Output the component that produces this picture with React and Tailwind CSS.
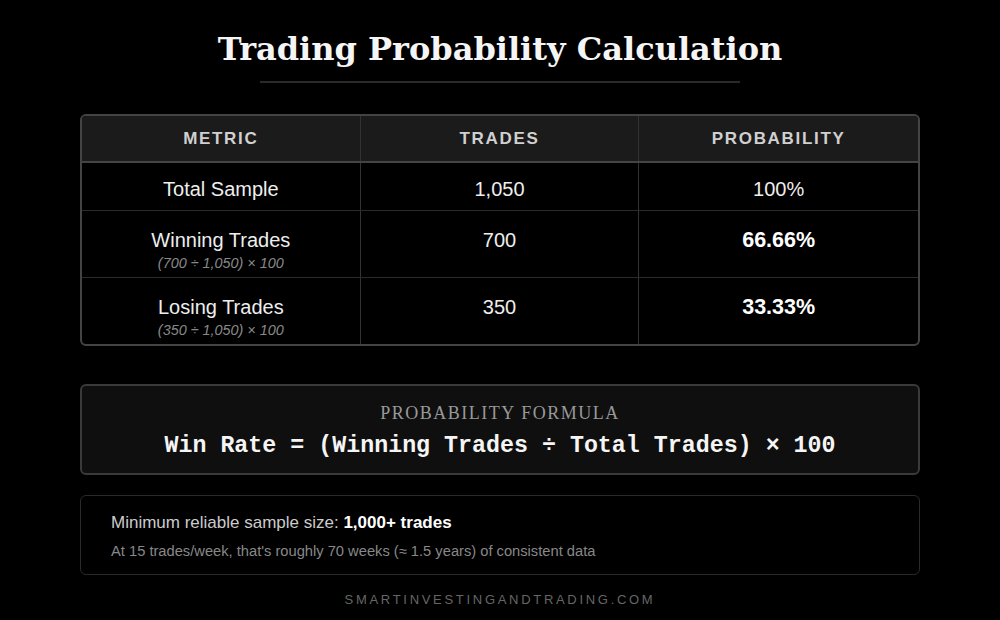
import React from 'react';

const rows = [
  { metric: 'Total Sample', trades: '1,050', prob: '100%', bold: false },
  { metric: 'Winning Trades', sub: '(700 ÷ 1,050) × 100', trades: '700', prob: '66.66%', bold: true },
  { metric: 'Losing Trades', sub: '(350 ÷ 1,050) × 100', trades: '350', prob: '33.33%', bold: true },
];

export default function App() {
  return (
    <div className="w-[1000px] h-[620px] bg-black text-white overflow-hidden px-20 font-['Liberation_Sans',Arial,sans-serif]">
      {/* Title */}
      <div className="pt-[29px] flex flex-col items-center">
        <h1 className="text-[32px] leading-[40px] font-bold text-[#f5f5f5] font-['DejaVu_Serif',serif]">
          Trading Probability Calculation
        </h1>
        <div className="mt-[12px] w-[480px] h-[2px] bg-[#2a2a2a]"></div>
      </div>

      {/* Table */}
      <div className="mt-[31px] border-2 border-[#444] rounded-md overflow-hidden">
        <div className="grid grid-cols-3 bg-[#1b1b1b] border-b-2 border-[#444]">
          {['METRIC', 'TRADES', 'PROBABILITY'].map((h, i) => (
            <div
              key={h}
              className={`h-[45px] flex items-center justify-center text-[17px] font-bold tracking-[1.7px] text-[#d0d0d0] ${i < 2 ? 'border-r border-[#333]' : ''}`}
            >
              {h}
            </div>
          ))}
        </div>
        {rows.map((r, idx) => (
          <div key={idx} className={`grid grid-cols-3 ${idx < 2 ? 'border-b border-[#2a2a2a]' : ''}`}>
            <div className={`flex flex-col items-center border-r border-[#333] ${r.sub ? 'h-[66px] pt-[17px]' : 'h-[47px] pt-[14px]'}`}>
              <span className="text-[20px] leading-[24px] text-[#eee]">{r.metric}</span>
              {r.sub && (
                <span className="mt-[1px] text-[14.4px] leading-[20px] italic text-[#888]">{r.sub}</span>
              )}
            </div>
            <div className={`flex justify-center border-r border-[#333] ${r.sub ? 'pt-[17px]' : 'pt-[14px]'}`}>
              <span className="text-[20px] leading-[24px] text-[#eee]">{r.trades}</span>
            </div>
            <div className={`flex justify-center ${r.sub ? 'pt-[17px]' : 'pt-[14px]'}`}>
              <span className={r.bold ? 'text-[21.5px] leading-[24px] font-bold text-white' : 'text-[20px] leading-[24px] text-[#eee]'}>
                {r.prob}
              </span>
            </div>
          </div>
        ))}
      </div>

      {/* Formula */}
      <div className="mt-[38px] h-[91px] border-2 border-[#3a3a3a] rounded-md bg-[#0f0f0f] flex flex-col items-center pt-[16px]">
        <div className="text-[18px] leading-[22px] tracking-[1.5px] text-[#999] font-['Liberation_Serif',serif]">
          PROBABILITY FORMULA
        </div>
        <div className="mt-[7px] text-[23.3px] leading-[30px] font-bold text-[#f5f5f5] font-['Liberation_Mono',monospace]">
          Win Rate = (Winning Trades ÷ Total Trades) × 100
        </div>
      </div>

      {/* Note */}
      <div className="mt-[20px] h-[80px] border border-[#2a2a2a] rounded-md px-[30px] pt-[16px]">
        <div className="text-[17px] leading-[22px] text-[#ccc]">
          Minimum reliable sample size: <span className="font-bold text-white">1,000+ trades</span>
        </div>
        <div className="mt-[8px] text-[14.7px] leading-[18px] text-[#888]">
          At 15 trades/week, that's roughly 70 weeks (≈ 1.5 years) of consistent data
        </div>
      </div>

      {/* Footer */}
      <div className="mt-[17px] text-center text-[13px] leading-[16px] tracking-[2.7px] text-[#666]">
        SMARTINVESTINGANDTRADING.COM
      </div>
    </div>
  );
}
